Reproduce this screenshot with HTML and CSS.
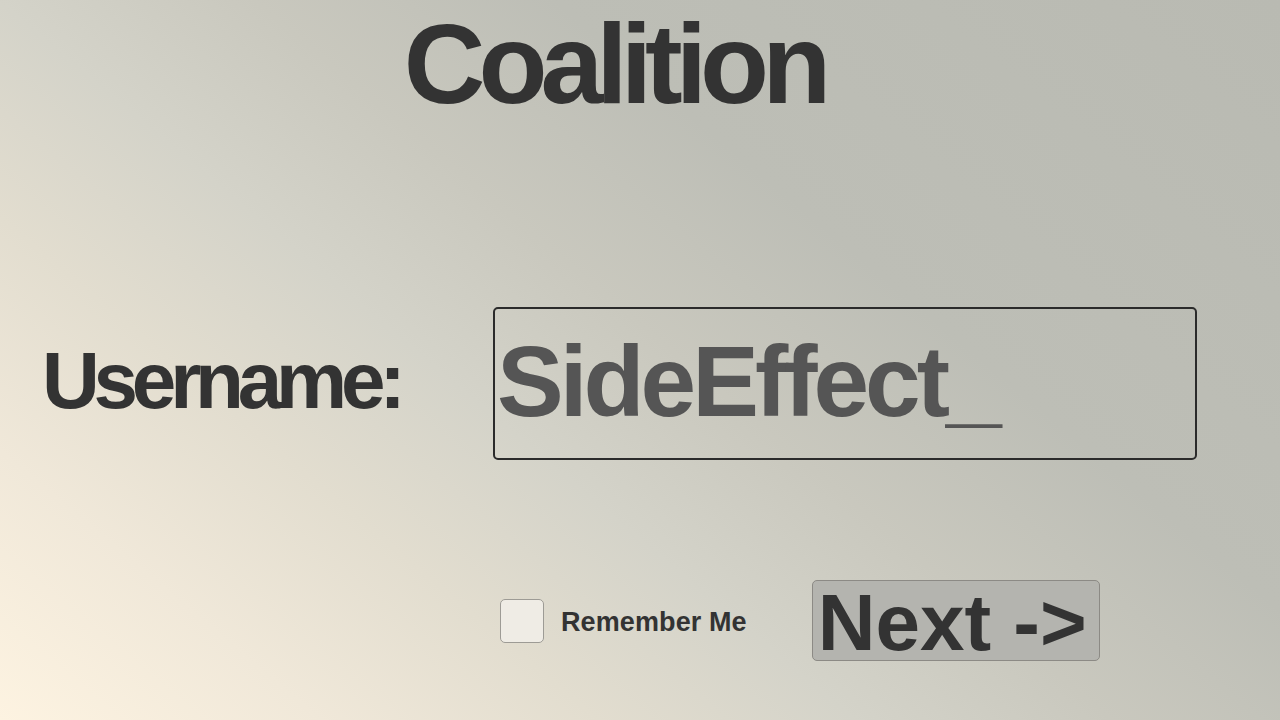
FILE: index.html
```html
<!DOCTYPE html>
<html>
<head>
    <title>Coalition - Login</title>
    <link rel="stylesheet" href="styles.css">
</head>
<body>
    <div id="screen">
        <h1 class="title">Coalition</h1>
        <div class="login-form">
            <label class="field-label" for="username">Username:</label>
            <input class="field-input" id="username" type="text" value="SideEffect_">
            <div class="options">
                <label class="remember">
                    <input class="remember-box" type="checkbox">
                    <span class="remember-text">Remember Me</span>
                </label>
                <button class="next-button">Next -&gt;</button>
            </div>
        </div>
    </div>
</body>
</html>
```

FILE: styles.css
```css
html, body {
    margin: 0;
    padding: 0;
}
body {
    font-family: "Liberation Sans", Arial, sans-serif;
    color: #333;
    background: linear-gradient(40deg, #fdf3e1 0%, #f0e8d9 15%, #e2ddcf 28%, #d4d3c9 40%, #c9c8be 52%, #bdbeb6 66%, #b9bab2 100%);
    height: 720px;
    overflow: hidden;
}
#screen {
    width: 1280px;
    height: 720px;
}
/* Game title */
.title {
    margin: 8px 0 0 0;
    padding-right: 52px;
    font-size: 113px;
    line-height: 1;
    font-weight: bold;
    letter-spacing: -7px;
    text-align: center;
    color: #333;
}
.login-form {
    display: grid;
    grid-template-columns: 451px 704px;
    row-gap: 120px;
    padding-left: 42px;
    margin-top: 186px;
}
.field-label {
    align-self: center;
    margin-bottom: 6px;
    font-size: 80px;
    line-height: 1;
    font-weight: bold;
    letter-spacing: -6.2px;
    color: #333;
}
.field-input {
    box-sizing: border-box;
    width: 704px;
    height: 153px;
    margin: 0;
    padding: 0 0 4px 2px;
    border: 2px solid #2b2b2b;
    border-radius: 5px;
    background: transparent;
    font-family: inherit;
    font-size: 100px;
    font-weight: bold;
    letter-spacing: -4px;
    color: #555;
    outline: none;
}
.options {
    grid-column: 2;
    display: flex;
    align-items: center;
    margin-left: 7px;
}
.remember {
    display: flex;
    align-items: center;
    gap: 17px;
}
.remember-box {
    appearance: none;
    -webkit-appearance: none;
    box-sizing: border-box;
    width: 44px;
    height: 44px;
    margin: 0;
    border: 1px solid #9d9b95;
    border-radius: 5px;
    background: #efece5;
}
.remember-text {
    padding-top: 3px;
    font-size: 27px;
    font-weight: bold;
    letter-spacing: 0.1px;
    color: #333;
}
.next-button {
    box-sizing: border-box;
    width: 288px;
    height: 81px;
    margin-left: 65px;
    padding: 2px 0 0 5px;
    border: 1.5px solid #8c8a85;
    border-radius: 5px;
    background: #b4b4af;
    font-family: inherit;
    font-size: 80px;
    line-height: 1;
    font-weight: bold;
    letter-spacing: 0;
    color: #333;
    text-align: left;
    cursor: pointer;
}
```
